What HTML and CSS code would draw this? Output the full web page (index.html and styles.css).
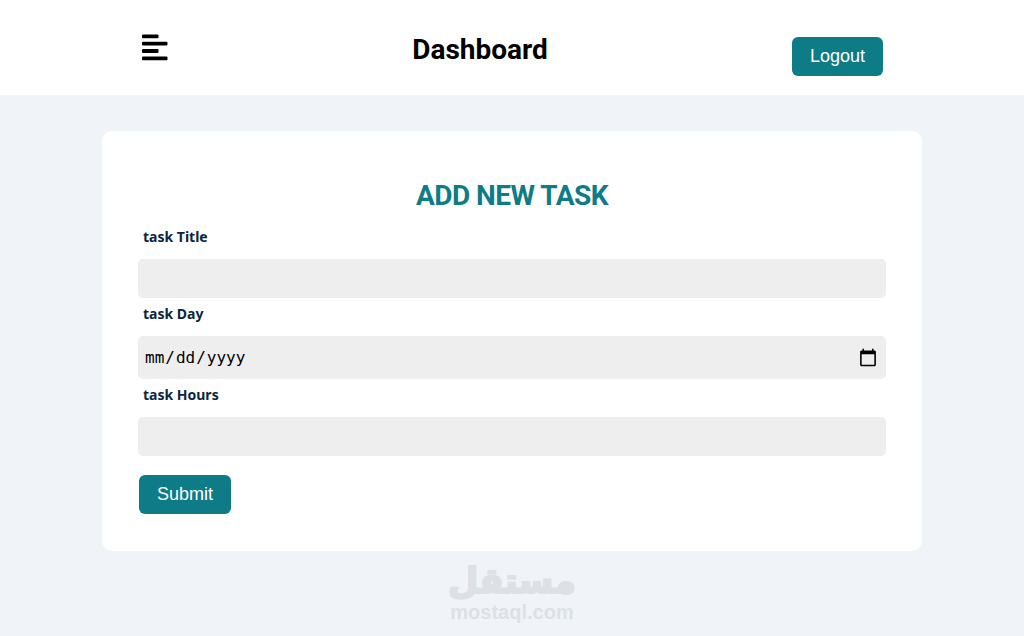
FILE: index.html
```html
<!DOCTYPE html>
<html lang="en">
<head>
<meta charset="utf-8">
<title>Dashboard</title>
<link rel="stylesheet" href="styles.css">
</head>
<body>
<header class="topbar">
  <button class="menu" type="button" aria-label="Menu">
    <svg width="26" height="27" viewBox="0 0 26 27"><g fill="#000"><rect x="0" y="0.500" width="16.500" height="3.800" rx="1"/><rect x="0" y="7.800" width="25.500" height="3.800" rx="1"/><rect x="0" y="15.100" width="16.500" height="3.800" rx="1"/><rect x="0" y="22.500" width="25.500" height="3.800" rx="1"/></g></svg>
  </button>
  <h1 class="title">Dashboard</h1>
  <button class="btn btn-logout" type="button">Logout</button>
</header>
<main class="content">
  <section class="card">
    <h2 class="heading">ADD NEW TASK</h2>
    <form class="form">
      <label class="label" for="title">task Title</label>
      <input class="field" id="title" type="text">
      <label class="label" for="day">task Day</label>
      <input class="field field-date" id="day" type="date">
      <label class="label" for="hours">task Hours</label>
      <input class="field" id="hours" type="text">
      <button class="btn btn-submit" type="button">Submit</button>
    </form>
  </section>
  <div class="watermark">
    <div class="wm-ar" dir="rtl" lang="ar">مستقل</div>
    <div class="wm-en">mostaql.com</div>
  </div>
</main>
</body>
</html>
```
FILE: styles.css
```css
* { box-sizing: border-box; }
html, body { margin: 0; height: 100%; }
body {
  background: #f0f4f8;
  font-family: "Noto Sans", sans-serif;
  overflow: hidden;
}
.topbar {
  background: #fff;
  height: 95px;
  padding: 0 141px 0 142px;
  display: flex;
  justify-content: space-between;
  align-items: flex-start;
}
.menu {
  background: none;
  border: 0;
  padding: 0;
  margin-top: 34px;
  width: 26px;
  height: 27px;
  display: block;
}
.menu svg { display: block; }
.title {
  margin: 30px 0 0;
  font-family: Roboto, "Noto Sans", sans-serif;
  font-size: 28px;
  line-height: 40px;
  font-weight: 700;
  color: #000;
}
.btn {
  background: #0e7c86;
  color: #fff;
  border: 0;
  border-radius: 6px;
  font-family: "Liberation Sans", Arial, sans-serif;
  font-size: 18px;
  height: 39px;
  padding: 0;
}
.btn-logout { width: 91px; margin-top: 37px; }
.content { padding: 36px 102px 0; }
.card {
  background: #fff;
  border-radius: 10px;
  height: 420px;
  padding: 45px 36px 0;
}
.heading {
  margin: 0;
  text-align: center;
  font-family: Roboto, "Noto Sans", sans-serif;
  font-size: 28px;
  line-height: 40px;
  font-weight: 700;
  color: #0e7c86;
  letter-spacing: -0.5px;
}
.form {
  display: flex;
  flex-direction: column;
  align-items: flex-start;
  padding-top: 5px;
}
.label {
  margin: 6px 0 11px 5px;
  height: 21px;
  font-size: 14px;
  line-height: 20px;
  font-weight: 700;
  color: #0a2540;
}
.field {
  width: 748px;
  height: 39px;
  margin: 0;
  border: 0;
  border-radius: 5px;
  background: #eee;
  display: block;
  outline: 0;
}
.field-date {
  height: 43px;
  font-family: "DejaVu Sans Mono", monospace;
  font-size: 16px;
  padding: 0 8px 0 6px;
  color: #000;
}
.field-date::-webkit-calendar-picker-indicator {
  width: 20px;
  height: 20px;
  padding: 0;
  margin: 0;
}
.btn-submit { width: 92px; margin: 19px 0 0 1px; }
.watermark { text-align: center; margin-top: 10px; color: #dde0e4; }
.wm-ar {
  font-family: "DejaVu Sans", sans-serif;
  font-weight: 700;
  font-size: 35px;
  line-height: 41px;
  -webkit-text-stroke: 2px #dde0e4;
}
.wm-en {
  font-family: "Liberation Sans", Arial, sans-serif;
  font-weight: 700;
  font-size: 20px;
  line-height: 21px;
}
```
